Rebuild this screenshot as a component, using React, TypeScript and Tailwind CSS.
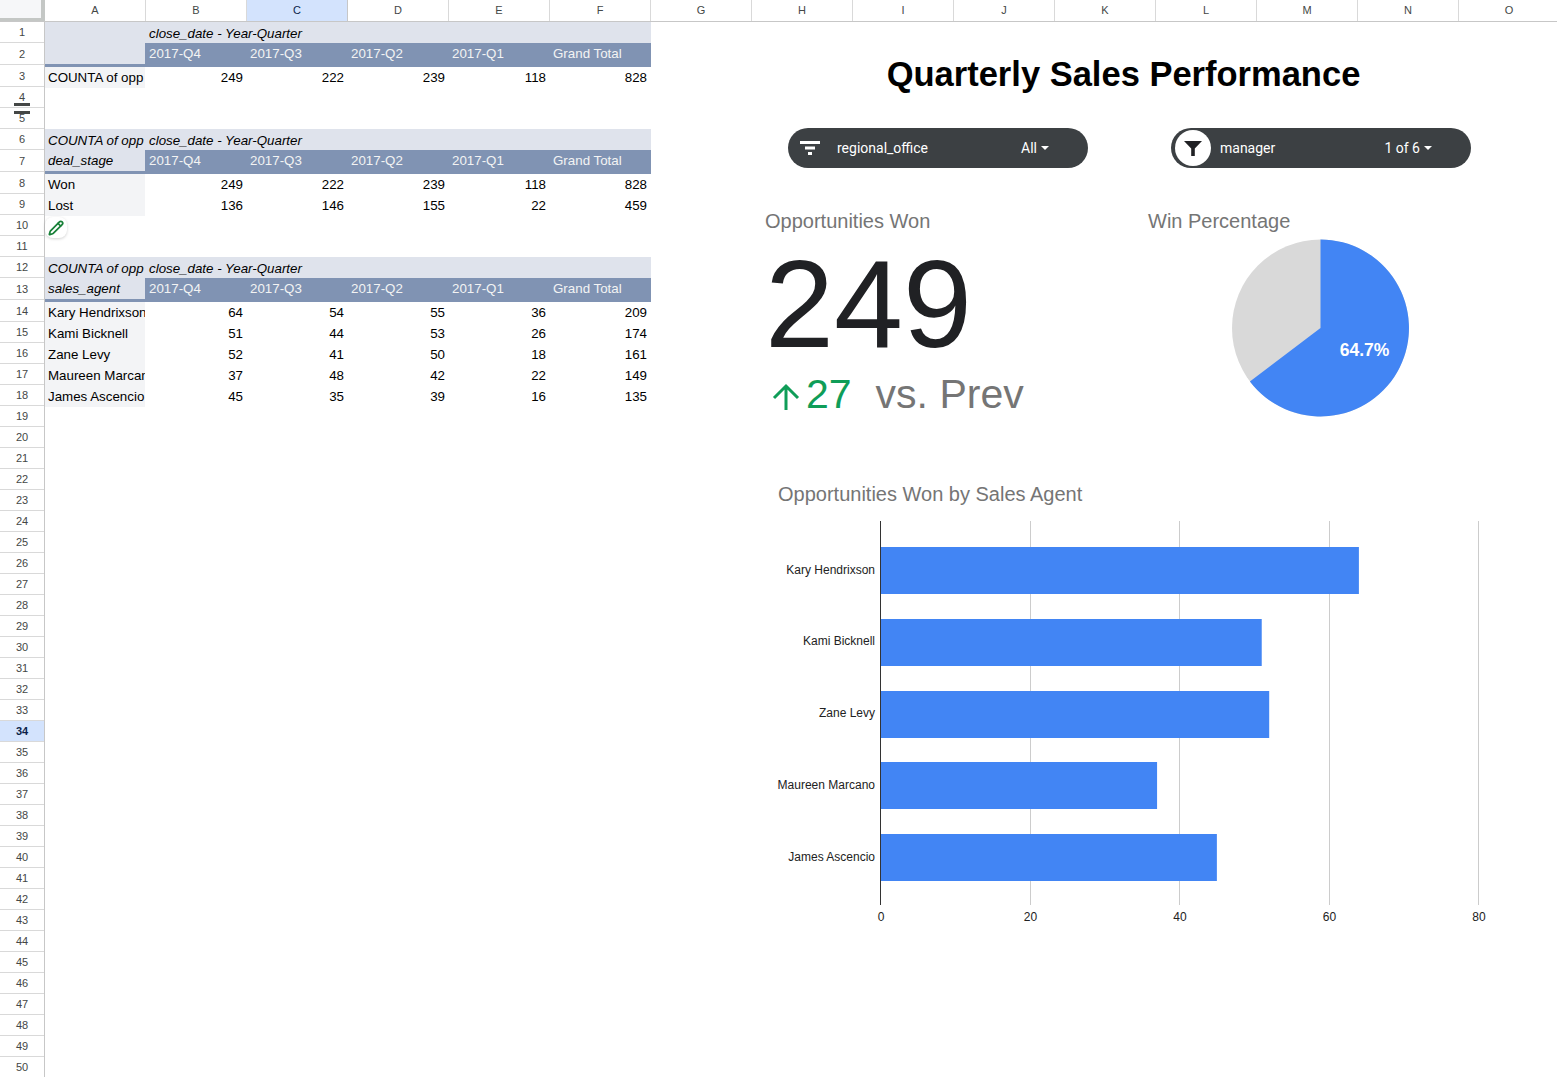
import { Pencil } from 'lucide-react';

const columns = ['A', 'B', 'C', 'D', 'E', 'F', 'G', 'H', 'I', 'J', 'K', 'L', 'M', 'N', 'O'];
const quarters = ['2017-Q4', '2017-Q3', '2017-Q2', '2017-Q1', 'Grand Total'];

// row heights are not uniform: header rows of a pivot are a bit taller
const tallRows = [2, 3, 7, 8, 13, 14];
const rowNumbers = Array.from({ length: 50 }, (_, i) => i + 1);

const agents = [
  { name: 'Kary Hendrixson', won: 64 },
  { name: 'Kami Bicknell', won: 51 },
  { name: 'Zane Levy', won: 52 },
  { name: 'Maureen Marcano', won: 37 },
  { name: 'James Ascencio', won: 45 },
];

function ColumnHeader() {
  return (
    <div className="flex h-[22px] bg-white border-b border-[#c7c7c7]">
      <div className="w-[45px] shrink-0 bg-[#f6f7f9] border-r-[4px] border-b-[3px] border-[#c4c7c5]" />
      {columns.map((col) => (
        <div
          key={col}
          className={
            col === 'C'
              ? 'w-[101px] shrink-0 flex items-center justify-center text-[11px] text-[#0b1f4a] font-medium bg-[#d3e3fd] border-r border-[#c7c7c7]'
              : 'w-[101px] shrink-0 flex items-center justify-center text-[11px] text-[#444746] border-r border-[#d9d9d9]'
          }
        >
          {col}
        </div>
      ))}
    </div>
  );
}

function RowGutter() {
  return (
    <div className="relative w-[45px] shrink-0 border-r border-[#c7c7c7]">
      {rowNumbers.map((n) => (
        <div
          key={n}
          className={`${tallRows.includes(n) ? 'h-[22px] pt-[2px]' : 'h-[21px]'} flex items-center justify-center border-b border-[#d9d9d9] text-[11px] ${
            n === 34 ? 'bg-[#d3e3fd] text-[#0b1f4a] font-bold' : 'text-[#444746]'
          }`}
        >
          {n}
        </div>
      ))}
      {/* hidden row markers */}
      <div className="absolute left-[14px] top-[81px] w-4 h-[3px] bg-[#444746]" />
      <div className="absolute left-[14px] top-[89px] w-4 h-[3px] bg-[#444746]" />
    </div>
  );
}

function PivotHead({ corner, label }: { corner?: string; label?: string }) {
  return (
    <div>
      <div className="flex h-[21px] leading-[23px] bg-[#dfe3ec] text-black italic">
        <div className="w-[100px] shrink-0 pl-[3px] whitespace-nowrap">{corner}</div>
        <div className="pl-1">close_date - Year-Quarter</div>
      </div>
      <div className="flex h-[24px]">
        <div className="w-[100px] shrink-0 pl-[3px] bg-[#dfe3ec] border-b-[3px] border-[#8093b3] italic text-black leading-[21px]">
          {label}
        </div>
        {quarters.map((q) => (
          <div key={q} className="w-[101px] last:w-[102px] shrink-0 bg-[#8093b3] pl-1 text-[#f3f3f3] leading-[21px]">
            {q}
          </div>
        ))}
      </div>
    </div>
  );
}

function PivotRow({ name, values }: { name: string; values: number[] }) {
  return (
    <div className="flex h-[21px] items-center text-black">
      <div className="w-[100px] h-full shrink-0 pl-[3px] bg-[#f3f4f6] overflow-hidden whitespace-nowrap leading-[21px]">
        {name}
      </div>
      {values.map((v, i) => (
        <div key={i} className="w-[101px] last:w-[102px] last:pr-1 shrink-0 pr-[3px] text-right">
          {v}
        </div>
      ))}
    </div>
  );
}

function Pivots() {
  return (
    <div className="relative w-[606px] shrink-0 text-[13.33px]">
      <PivotHead />
      <PivotRow name="COUNTA of opp" values={[249, 222, 239, 118, 828]} />

      <div className="mt-[41px]">
        <PivotHead corner="COUNTA of opp" label="deal_stage" />
        <PivotRow name="Won" values={[249, 222, 239, 118, 828]} />
        <PivotRow name="Lost" values={[136, 146, 155, 22, 459]} />
      </div>

      <div className="mt-[41px]">
        <PivotHead corner="COUNTA of opp" label="sales_agent" />
        <PivotRow name="Kary Hendrixson" values={[64, 54, 55, 36, 209]} />
        <PivotRow name="Kami Bicknell" values={[51, 44, 53, 26, 174]} />
        <PivotRow name="Zane Levy" values={[52, 41, 50, 18, 161]} />
        <PivotRow name="Maureen Marcano" values={[37, 48, 42, 22, 149]} />
        <PivotRow name="James Ascencio" values={[45, 35, 39, 16, 135]} />
      </div>

      {/* edit button floating over the sheet */}
      <div className="absolute left-0 top-[195px] w-[22px] h-[21px] rounded-lg bg-white shadow-[0_1px_3px_rgba(0,0,0,0.18)] flex items-center justify-center">
        <Pencil size={16} className="text-[#188038]" strokeWidth={2.6} />
      </div>
    </div>
  );
}

function FilterChip({ label, value, active }: { label: string; value: string; active?: boolean }) {
  return (
    <div className="flex w-[300px] h-10 items-center rounded-[20px] bg-[#3c4043] text-white text-sm font-['Roboto',sans-serif]">
      {active ? (
        <div className="ml-1 w-9 h-9 shrink-0 rounded-full bg-white flex items-center justify-center">
          <svg width="18" height="15" viewBox="0 0 18 15">
            <path d="M0 0h18l-7.2 7.4V15H7.2V7.4z" fill="#202124" />
          </svg>
        </div>
      ) : (
        <div className="ml-3 w-5 shrink-0">
          <svg width="20" height="14" viewBox="0 0 20 14" className="block">
            <path d="M0 0h20v3H0zM5 5.5h10v3H5zM8 11h4v3H8z" fill="#fff" />
          </svg>
        </div>
      )}
      <span className={active ? 'ml-[9px]' : 'ml-[17px]'}>{label}</span>
      <span className="ml-auto mr-[39px] flex items-center gap-1">
        {value}
        <span className="w-0 h-0 border-x-[4px] border-x-transparent border-t-[4px] border-t-white" />
      </span>
    </div>
  );
}

function WinPie() {
  return (
    <svg width="178" height="178" viewBox="0 0 178 178" className="block">
      <circle cx="88.5" cy="89" r="88.5" fill="#d9d9d9" />
      <path d="M88.5 89V0.5A88.5 88.5 0 1 1 17.9 142.4z" fill="#4285f4" />
      <text x="132.5" y="117" textAnchor="middle" fontSize="17.5" fontWeight="700" fill="#fff">
        64.7%
      </text>
    </svg>
  );
}

function AgentBars() {
  const x0 = 110.5;
  const perUnit = 7.475;
  return (
    <svg width="730" height="420" viewBox="0 0 730 420" className="block">
      {[20, 40, 60, 80].map((t) => {
        // snap to a whole pixel so the gridline stays crisp
        const x = Math.floor(x0 + t * perUnit) + 0.5;
        return <line key={t} x1={x} x2={x} y1="6" y2="390" stroke="#cccccc" />;
      })}
      {agents.map((a, i) => (
        <g key={a.name}>
          <rect x={x0} y={Math.round(32 + i * 71.75)} width={a.won * perUnit} height="47" fill="#4285f4" />
          <text x="105" y={Math.floor(59 + i * 71.75)} textAnchor="end" fontSize="12" fill="#222">
            {a.name}
          </text>
        </g>
      ))}
      <line x1={x0} x2={x0} y1="6" y2="390" stroke="#333" />
      {[0, 20, 40, 60, 80].map((t) => (
        <text key={t} x={x0 + t * perUnit + 0.5} y="406" textAnchor="middle" fontSize="12" fill="#222">
          {t}
        </text>
      ))}
    </svg>
  );
}

function Dashboard() {
  return (
    <div className="flex-1 min-w-0">
      <h1 className="mt-[34px] pl-[39px] text-center text-[34.5px] leading-9 font-bold text-black">
        Quarterly Sales Performance
      </h1>

      <div className="mt-[36px] ml-[137px] flex gap-[83px]">
        <FilterChip label="regional_office" value="All" />
        <FilterChip label="manager" value="1 of 6" active />
      </div>

      <div className="mt-[41px] ml-[114px] flex">
        <div className="w-[383px] shrink-0">
          <div className="text-[20px] leading-6 text-[#757575]">Opportunities Won</div>
          <div className="mt-[11px] text-[124px] leading-[120px] text-[#202124]">249</div>
          <div className="mt-[6px] flex items-center h-12 text-[41px] leading-[48px]">
            <svg width="30" height="30" viewBox="0 0 30 30" className="ml-[6px] mt-[6px]">
              <path d="M15 28V4M3 16L15 4l12 12" fill="none" stroke="#0f9d58" strokeWidth="3" />
            </svg>
            <span className="ml-[5px] text-[#0f9d58]">27</span>
            <span className="ml-[24px] text-[#757575]">vs. Prev</span>
          </div>
        </div>
        <div>
          <div className="text-[20px] leading-6 text-[#757575]">Win Percentage</div>
          <div className="mt-[6px] ml-[84px]">
            <WinPie />
          </div>
        </div>
      </div>

      <div className="mt-[64px] ml-[127px] text-[20px] leading-6 text-[#757575]">
        Opportunities Won by Sales Agent
      </div>
      <div className="mt-[9px] ml-[119px]">
        <AgentBars />
      </div>
    </div>
  );
}

export default function App() {
  return (
    <div className="w-[1557px] h-[1077px] overflow-hidden bg-white font-['Liberation_Sans',Arial,sans-serif]">
      <ColumnHeader />
      <div className="flex">
        <RowGutter />
        <Pivots />
        <Dashboard />
      </div>
    </div>
  );
}
